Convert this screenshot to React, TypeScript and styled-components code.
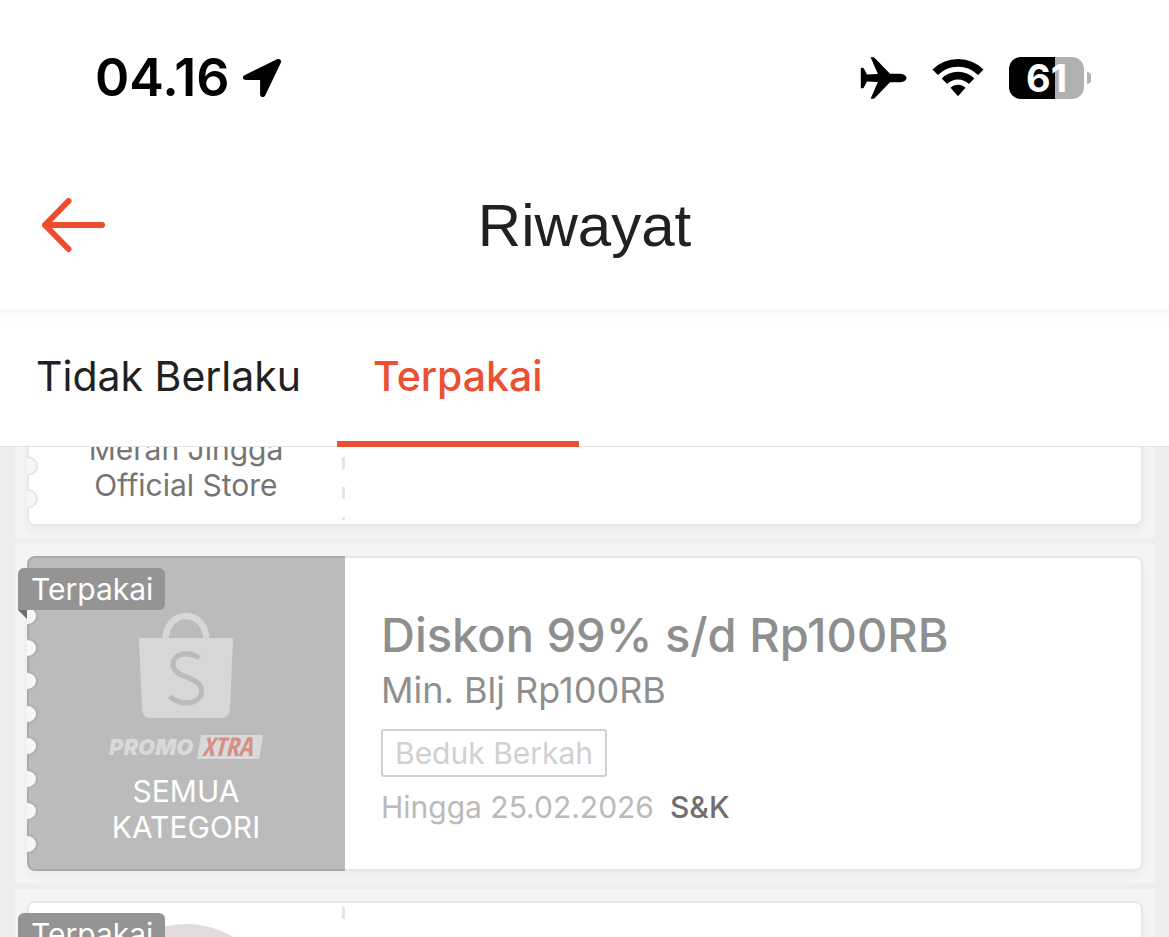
import React, { useLayoutEffect, useRef } from "react";
import styled, { createGlobalStyle } from "styled-components";

const GlobalStyle = createGlobalStyle`
  * { box-sizing: border-box; }
  body { margin: 0; background: #ffffff; }
`;

const Screen = styled.div`
  display: flex;
  flex-direction: column;
  height: 100vh;
  overflow: hidden;
  background: #ffffff;
  font-family: Inter, "Liberation Sans", sans-serif;
  color: #212121;
`;

const StatusBar = styled.div`
  display: flex;
  align-items: center;
  justify-content: space-between;
  flex: none;
  height: 156px;
  padding: 0 78px 0 95px;
  color: #000000;
`;

const StatusGroup = styled.div<{ $gap: number }>`
  display: flex;
  align-items: center;
  gap: ${(p) => p.$gap}px;
`;

const Clock = styled.time`
  font-size: 52px;
  line-height: 60px;
  font-weight: 600;
`;

const Battery = styled.div`
  display: flex;
  align-items: center;
  gap: 3px;
`;

const BatteryBody = styled.div<{ $level: number }>`
  width: 75px;
  height: 42px;
  border-radius: 12px;
  background: linear-gradient(to right, #000000 ${(p) => p.$level}%, #b1b1b1 ${(p) => p.$level}%);
  color: #ffffff;
  font-size: 38px;
  line-height: 42px;
  font-weight: 700;
  text-align: center;
`;

const BatteryTip = styled.div`
  width: 4px;
  height: 12px;
  border-radius: 0 4px 4px 0;
  background: #b1b1b1;
`;

const TitleBar = styled.header`
  display: grid;
  grid-template-columns: 146px 1fr 146px;
  align-items: center;
  flex: none;
  height: 153px;
  padding-bottom: 16px;
`;

const BackButton = styled.button`
  display: flex;
  padding: 0 0 0 40px;
  border: 0;
  background: none;
`;

const Title = styled.h1`
  margin: 0;
  padding-top: 2px;
  font-family: "Liberation Sans", Arial, sans-serif;
  font-size: 60px;
  line-height: 72px;
  font-weight: 400;
  text-align: center;
`;

const TabBar = styled.nav`
  display: flex;
  flex: none;
  height: 138px;
  border-bottom: 1px solid #e4e4e4;
  background: linear-gradient(#f7f7f7, #ffffff 12px);
`;

const Tab = styled.button<{ $active?: boolean }>`
  height: 138px;
  padding: 2px 36px 0;
  border: 0;
  border-bottom: 6px solid ${(p) => (p.$active ? "#ea5034" : "transparent")};
  background: none;
  font-family: inherit;
  font-size: 41px;
  line-height: 50px;
  font-weight: ${(p) => (p.$active ? 500 : 400)};
  color: ${(p) => (p.$active ? "#ea5034" : "#212121")};
`;

const List = styled.main`
  flex: 1;
  min-height: 0;
  overflow-y: auto;
  scrollbar-width: none;
  background: #eeeeee;
`;

const Rows = styled.ul`
  display: flex;
  flex-direction: column;
  gap: 6px;
  margin: 0;
  padding: 0 14px 0 15px;
  list-style: none;
`;

const Row = styled.li`
  padding: 12px;
  background: #f4f4f4;
`;

const Card = styled.article`
  position: relative;
  display: flex;
  min-height: 315px;
  border-radius: 8px;
  background: #ffffff;
  box-shadow: 0 5px 8px rgba(0, 0, 0, 0.04);
`;

const Outline = styled.div`
  position: absolute;
  inset: 0;
  border: 2px solid rgba(0, 0, 0, 0.09);
  border-radius: 8px;
  pointer-events: none;
`;

const Notches = styled.div<{ $filled?: boolean }>`
  position: absolute;
  top: 17px;
  bottom: 17px;
  left: 0;
  display: flex;
  flex-direction: column;
  justify-content: space-between;
  width: 12px;
  overflow: hidden;

  i {
    width: 22px;
    height: 20px;
    margin-left: -11px;
    border: 2px solid ${(p) => (p.$filled ? "#b0b0b0" : "#e6e6e6")};
    border-radius: 50%;
    background: #f7f7f7;
  }
`;

const Shop = styled.div<{ $filled?: boolean }>`
  display: flex;
  flex-direction: column;
  align-items: center;
  gap: 13px;
  flex: none;
  width: 318px;
  padding-top: 23px;
  border-radius: 8px 0 0 8px;
  background: ${(p) => (p.$filled ? "#bbbbbb" : "#ffffff")};
`;

const ShopName = styled.p<{ $filled?: boolean }>`
  margin: 0;
  font-size: 30px;
  line-height: 36px;
  text-align: center;
  color: ${(p) => (p.$filled ? "#ffffff" : "#757575")};
`;

const ShopLogo = styled.div`
  flex: none;
  width: 184px;
  height: 184px;
  border-radius: 50%;
  background: #e2dadd;
`;

const Divider = styled.div`
  flex: none;
  width: 3px;
  margin: 6px 0 6px -3px;
  background: repeating-linear-gradient(#e4e4e4 0 12px, transparent 12px 30px);
`;

const Info = styled.div`
  display: flex;
  flex-direction: column;
  align-items: flex-start;
  justify-content: center;
  flex: 1;
  min-width: 0;
  padding: 2px 36px 0;
`;

const Offer = styled.h2`
  margin: 0;
  font-size: 47px;
  line-height: 60px;
  font-weight: 500;
  color: #8f8f8f;
`;

const Minimum = styled.p`
  margin: 0;
  font-size: 36px;
  line-height: 50px;
  color: #8f8f8f;
`;

const Label = styled.span`
  margin: 14px 0 12px;
  padding: 0 12px;
  border: 2px solid #d0d0d0;
  border-radius: 3px;
  font-size: 30px;
  line-height: 44px;
  color: #d0d0d0;
`;

const Validity = styled.p`
  display: flex;
  gap: 16px;
  margin: 0;
  font-size: 30px;
  line-height: 36px;
  color: #bababa;
`;

const Terms = styled.a`
  font-weight: 500;
  color: #6f6f6f;
  text-decoration: none;
`;

const Tag = styled.span`
  position: absolute;
  top: 12px;
  left: -9px;
  padding: 0 12px 0 13px;
  border-radius: 6px 6px 6px 0;
  background: #949494;
  font-size: 30px;
  line-height: 42px;
  color: #ffffff;

  &::after {
    content: "";
    position: absolute;
    top: 100%;
    left: 0;
    border-top: 9px solid #6e6e6e;
    border-left: 9px solid transparent;
  }
`;

const Lockup = styled.div`
  display: flex;
  flex-direction: column;
  align-items: center;
  gap: 15px;
  padding-top: 33px;
`;

const LocationIcon = () => (
  <svg width="40" height="40" viewBox="0 0 40 40" aria-hidden="true">
    <path d="M2.5 17.2 35 1.3c2.700-1.300 5 .9 3.700 3.600L23.300 37.200c-1.400 2.900-5.200 2.200-5.200-1V22H4c-3.300 0-4.200-3.500-1.500-4.800Z" fill="#000" />
  </svg>
);

const PlaneIcon = () => (
  <svg width="47" height="42" viewBox="0 0 47 42" aria-hidden="true">
    <path d="M46.500 21c0-2.400-3-4.300-7.500-4.300H30L15 1.300C14.300.5 13.700.3 12.800.3H10.600l7.300 16.600-10.900.7-3.200-6C3.400 10.900 3 10.700 2.300 10.700H.8V31.300h1.500c.7 0 1.100-.2 1.500-.9l3.200-6 10.900.7-7.300 16.600h2.200c.9 0 1.500-.2 2.200-1L30 25.300h9c4.500 0 7.500-1.900 7.500-4.300Z" fill="#000" />
  </svg>
);

const WifiIcon = () => (
  <svg width="52" height="38" viewBox="0 0 52 38" aria-hidden="true">
    <g fill="none" stroke="#000" strokeWidth="7.600">
      <path d="M3.200 13.300a32.200 32.200 0 0 1 45.600 0" />
      <path d="M12.400 22.300a19.200 19.200 0 0 1 27.200 0" />
    </g>
    <path d="M18.500 28.800a10.600 10.600 0 0 1 15 0L26.700 36.600c-.4.400-1 .4-1.400 0Z" fill="#000" />
  </svg>
);

const BackIcon = () => (
  <svg width="66" height="56" viewBox="0 0 66 56" aria-hidden="true">
    <path d="M62 28H5M28.500 4 5 28l23.500 24" fill="none" stroke="#ee4d2d" strokeWidth="6" strokeLinecap="round" strokeLinejoin="round" />
  </svg>
);

const BagIcon = () => (
  <svg width="96" height="107" viewBox="0 0 96 107" aria-hidden="true">
    <path d="M27.500 28C28 14 36 4 48 4s20 10 20.500 24" fill="none" stroke="#d7d7d7" strokeWidth="6.500" />
    <path d="M2.500 26h91c1 0 1.600.7 1.500 1.700L92 97c-.3 6-3.500 9-8.500 9h-71C7 106 4.400 103 4 97L1 27.700C1 26.700 1.500 26 2.500 26Z" fill="#d7d7d7" />
    <path d="M61.500 46C56 42 50 41.500 45.500 42c-6.500.8-10.500 5-10.500 10.500 0 14 28.500 11.500 28.500 26.500 0 7.500-6.500 12-14.500 12-6 0-12-2-17.500-6.500" fill="none" stroke="#bbbbbb" strokeWidth="5.200" />
  </svg>
);

const PromoLogo = () => (
  <svg width="156" height="26" viewBox="0 0 156 26" role="img" aria-label="Promo Xtra" fontStyle="italic">
    <text x="1" y="21" fontSize="22" fontWeight="900" fontFamily="Inter, sans-serif" fill="#d9d9d9">PROMO</text>
    <path d="M93 1h62l-4 24H89Z" fill="#d9d9d9" />
    <text x="94" y="22" fontSize="26" fontWeight="700" fontFamily="'Liberation Sans Narrow', 'Open Sans Condensed', 'Liberation Sans', sans-serif" fill="#d58f85">XTRA</text>
  </svg>
);

const notchKeys = [0, 1, 2, 3, 4, 5, 6, 7, 8];

type VoucherProps = {
  filled?: boolean;
  shop: React.ReactNode;
  children?: React.ReactNode;
};

const Voucher = ({ filled, shop, children }: VoucherProps) => (
  <Row>
    <Card>
      <Shop $filled={filled}>{shop}</Shop>
      {!filled && <Divider />}
      <Info>{children}</Info>
      <Outline />
      <Notches $filled={filled}>
        {notchKeys.map((k) => (
          <i key={k} />
        ))}
      </Notches>
      <Tag>Terpakai</Tag>
    </Card>
  </Row>
);

// The list opens scrolled part of the way through the first voucher.
const INITIAL_SCROLL = 248;

export default function App() {
  const list = useRef<HTMLElement>(null);

  useLayoutEffect(() => {
    if (list.current) list.current.scrollTop = INITIAL_SCROLL;
  }, []);

  return (
    <Screen>
      <GlobalStyle />
      <StatusBar>
        <StatusGroup $gap={13}>
          <Clock>04.16</Clock>
          <LocationIcon />
        </StatusGroup>
        <StatusGroup $gap={25}>
          <PlaneIcon />
          <WifiIcon />
          <Battery>
            <BatteryBody $level={61}>61</BatteryBody>
            <BatteryTip />
          </Battery>
        </StatusGroup>
      </StatusBar>
      <TitleBar>
        <BackButton aria-label="Kembali">
          <BackIcon />
        </BackButton>
        <Title>Riwayat</Title>
      </TitleBar>
      <TabBar>
        <Tab>Tidak Berlaku</Tab>
        <Tab $active>Terpakai</Tab>
      </TabBar>
      <List ref={list}>
        <Rows>
          <Voucher
            shop={
              <>
                <ShopLogo />
                <ShopName>
                  Merah Jingga
                  <br />
                  Official Store
                </ShopName>
              </>
            }
          />
          <Voucher
            filled
            shop={
              <>
                <Lockup>
                  <BagIcon />
                  <PromoLogo />
                </Lockup>
                <ShopName $filled>
                  SEMUA
                  <br />
                  KATEGORI
                </ShopName>
              </>
            }
          >
            <Offer>Diskon 99% s/d Rp100RB</Offer>
            <Minimum>Min. Blj Rp100RB</Minimum>
            <Label>Beduk Berkah</Label>
            <Validity>
              Hingga 25.02.2026 <Terms href="#sk">S&amp;K</Terms>
            </Validity>
          </Voucher>
          <Voucher shop={<ShopLogo />} />
        </Rows>
      </List>
    </Screen>
  );
}
